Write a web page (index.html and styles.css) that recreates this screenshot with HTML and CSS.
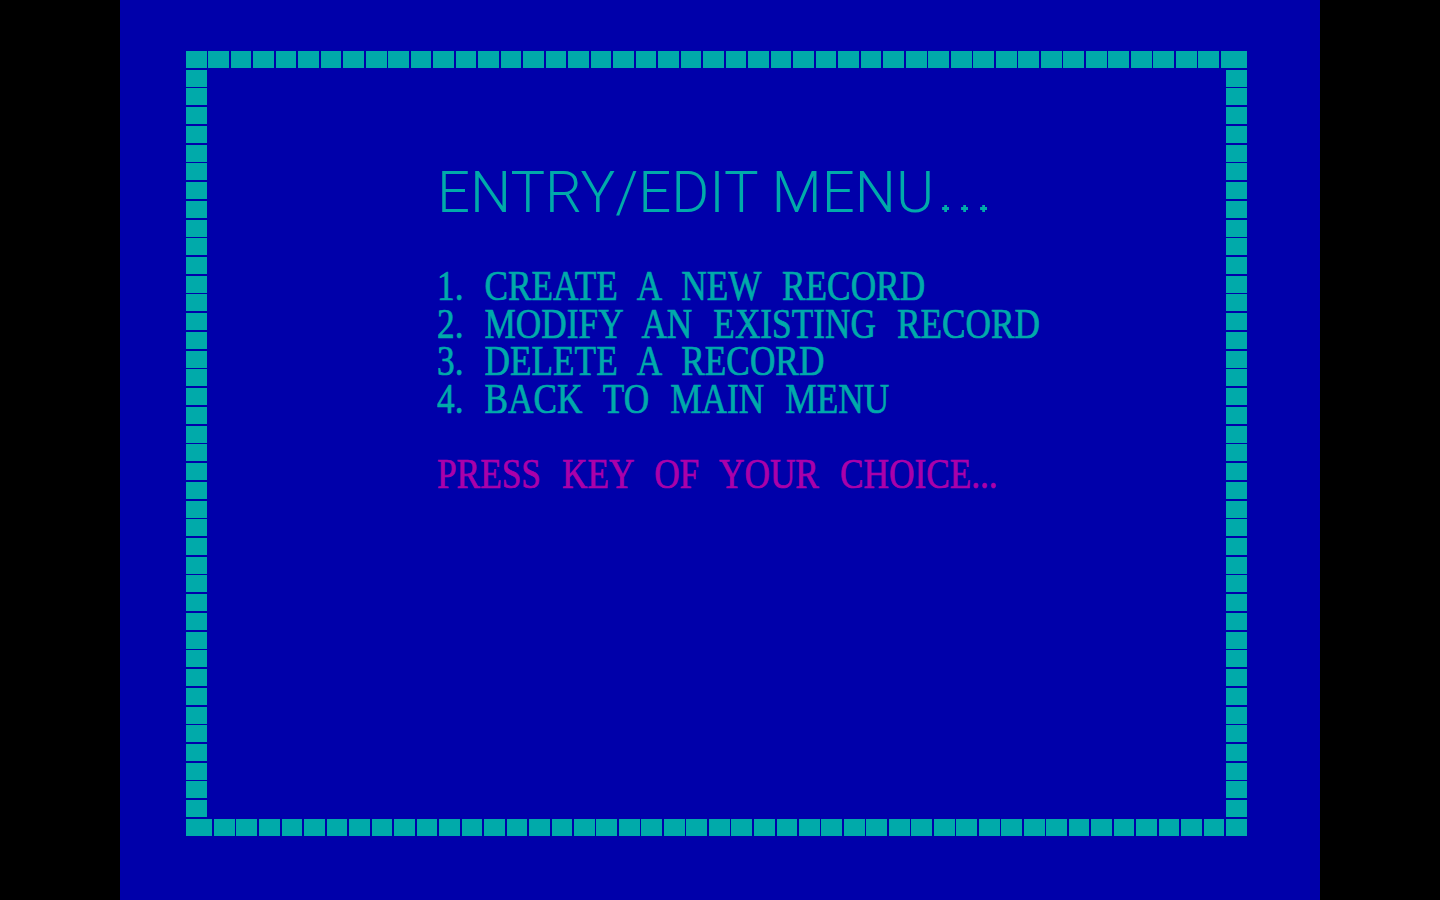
FILE: index.html
```html
<!DOCTYPE html>
<html lang="en">
<head>
<meta charset="utf-8">
<title>Entry/Edit Menu</title>
<link rel="stylesheet" href="styles.css">
</head>
<body>
<div class="screen">
  <div class="frame">
    <div class="content">
      <h1 class="title">ENTRY/EDIT MENU<span class="dots"><i></i><i></i><i></i></span></h1>
      <ol class="menu">
        <li class="item">1. CREATE A NEW RECORD</li>
        <li class="item">2. MODIFY AN EXISTING RECORD</li>
        <li class="item">3. DELETE A RECORD</li>
        <li class="item">4. BACK TO MAIN MENU</li>
      </ol>
      <p class="prompt">PRESS KEY OF YOUR CHOICE...</p>
    </div>
  </div>
</div>
</body>
</html>
```

FILE: styles.css
```css
html, body {
  margin: 0;
  padding: 0;
  background: #000000;
  width: 1440px;
  height: 900px;
  overflow: hidden;
}

.screen {
  width: 1200px;
  height: 900px;
  margin-left: 120px;
  background: #0000aa;
  overflow: hidden;
}

.frame {
  margin: 51px 0 0 66px;
  width: 1061px;
  height: 785px;
  background:
    repeating-linear-gradient(to right, #00aaaa 0 20.5px, transparent 20.5px 22.5px) left top / 100% 17px no-repeat,
    repeating-linear-gradient(to left, #00aaaa 0 20.5px, transparent 20.5px 22.5px) right bottom / 100% 17px no-repeat,
    repeating-linear-gradient(to bottom, #00aaaa 0 17px, transparent 17px 18.73px) left top / 21px 100% no-repeat,
    repeating-linear-gradient(to bottom, #00aaaa 0 17px, transparent 17px 18.73px) right top / 21px 100% no-repeat;
}

.content {
  padding: 112px 0 0 251px;
}

.title {
  margin: 0;
  font-family: Roboto, "Liberation Sans", sans-serif;
  font-weight: 300;
  font-size: 58px;
  line-height: 58px;
  color: #00aaaa;
  letter-spacing: 0;
  white-space: nowrap;
  display: flex;
  align-items: baseline;
}

.dots {
  display: inline-flex;
  gap: 12px;
  margin-left: 8px;
}

.dots i {
  display: block;
  width: 7px;
  height: 7px;
  background: #00aaaa;
  clip-path: polygon(30% 0, 70% 0, 70% 30%, 100% 30%, 100% 70%, 70% 70%, 70% 100%, 30% 100%, 30% 70%, 0 70%, 0 30%, 30% 30%);
}

.menu {
  list-style: none;
  margin: 47px 0 0 0;
  padding: 0;
  color: #00aaaa;
}

.item,
.prompt {
  font-family: "Liberation Serif", serif;
  font-size: 42px;
  line-height: 37.5px;
  white-space: pre;
  word-spacing: 14.5px;
  transform: scaleX(0.84);
  transform-origin: left center;
  -webkit-text-stroke: 0.7px currentColor;
}

.prompt {
  margin: 38px 0 0 0;
  color: #aa00aa;
}
```
